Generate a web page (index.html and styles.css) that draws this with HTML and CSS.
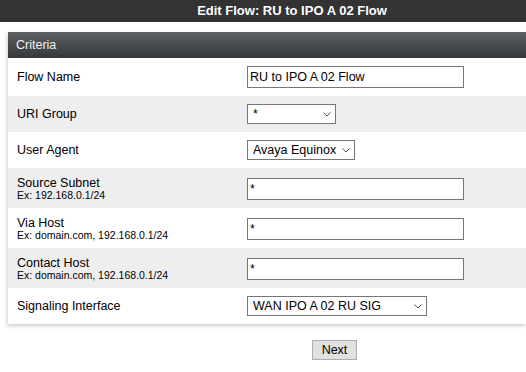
FILE: index.html
```html
<!doctype html>
<html lang="en">
<head>
<title>Edit Flow: RU to IPO A 02 Flow</title>
<meta charset=UTF-8>
<link rel="stylesheet" href="styles.css">
</head>
<body>
<div class="titlebar"><span>Edit Flow: RU to IPO A 02 Flow</span></div>
<div class="panel">
<div class="panel-head">Criteria</div>
<div class="row">
<label class="lbl" for="flowname">Flow Name</label>
<div><input class="txt" id="flowname" type="text" value="RU to IPO A 02 Flow"></div>
</div>
<div class="row alt">
<label class="lbl" for="urigroup">URI Group</label>
<div><span class="sel sel-uri"><select id="urigroup"><option>*</option></select><svg viewBox="0 0 8 5"><path d="M0.5 0.5 L4 4 L7.5 0.5" fill="none" stroke="#555" stroke-width="1"/></svg></span></div>
</div>
<div class="row">
<label class="lbl" for="useragent">User Agent</label>
<div><span class="sel sel-ua"><select id="useragent"><option>Avaya Equinox</option></select><svg viewBox="0 0 8 5"><path d="M0.5 0.5 L4 4 L7.5 0.5" fill="none" stroke="#555" stroke-width="1"/></svg></span></div>
</div>
<div class="row alt tall">
<label class="lbl" for="srcsubnet">Source Subnet<span class="hint">Ex: 192.168.0.1/24</span></label>
<div><input class="txt" id="srcsubnet" type="text" value="*"></div>
</div>
<div class="row tall">
<label class="lbl" for="viahost">Via Host<span class="hint">Ex: domain.com, 192.168.0.1/24</span></label>
<div><input class="txt" id="viahost" type="text" value="*"></div>
</div>
<div class="row alt tall">
<label class="lbl" for="contacthost">Contact Host<span class="hint">Ex: domain.com, 192.168.0.1/24</span></label>
<div><input class="txt" id="contacthost" type="text" value="*"></div>
</div>
<div class="row">
<label class="lbl" for="sigif">Signaling Interface</label>
<div><span class="sel sel-sig"><select id="sigif"><option>WAN IPO A 02 RU SIG</option></select><svg viewBox="0 0 8 5"><path d="M0.5 0.5 L4 4 L7.5 0.5" fill="none" stroke="#555" stroke-width="1"/></svg></span></div>
</div>
</div>
<div class="actions"><button class="btn" type="button">Next</button></div>
</body>
</html>
```
FILE: styles.css
```css
html, body {margin: 0; overflow: hidden; background: #fff;}
body, input, select, button {font-family: "Liberation Sans", Arial, sans-serif; color: #000;}
.titlebar {height: 22px; padding-left: 58px; background: #333; color: #fff; font-size: 13px; font-weight: bold; line-height: 22px; text-align: center;}
.panel {margin: 10px 0 0 8px; background: #fff; box-shadow: -1px 2px 4px rgba(0,0,0,0.2);}
.panel-head {height: 26px; line-height: 26px; padding-left: 8px; font-size: 12.5px; color: #f2f2f2; background: linear-gradient(#5d6063, #35383b);}
.row {display: grid; grid-template-columns: 230px 1fr; align-items: center; padding: 8px 9px; background: #fff;}
.row.alt {background: #eee;}
.row.tall {padding: 8px 9px 7px 9px;}
.lbl {font-size: 12.5px; line-height: 14px;}
.hint {display: block; font-size: 10.5px; line-height: 11px;}
.txt {box-sizing: border-box; width: 217px; height: 22px; margin: 0; padding: 0 2px; border: 1px solid #767676; border-radius: 0; font-size: 12.5px; background: #fff; outline: none;}
.sel {position: relative; display: inline-block; vertical-align: top;}
.sel select {-webkit-appearance: none; appearance: none; box-sizing: border-box; height: 20px; margin: 0; padding: 0 0 0 5px; border: 1px solid #767676; border-radius: 0; font-size: 12.5px; background: #fff; display: block;}
.sel svg {position: absolute; right: 5px; top: 8px; width: 8px; height: 5px; pointer-events: none;}
.sel-uri select {width: 89px;}
.sel-ua select {width: 108px;}
.sel-sig select {width: 180px;}
.actions {padding: 16px 0 0 312px;}
.btn {box-sizing: border-box; width: 45px; height: 20px; margin: 0; padding: 0; border: 1px solid #adadad; border-radius: 0; background: #e1e1e1; font-size: 12.5px;}
```
